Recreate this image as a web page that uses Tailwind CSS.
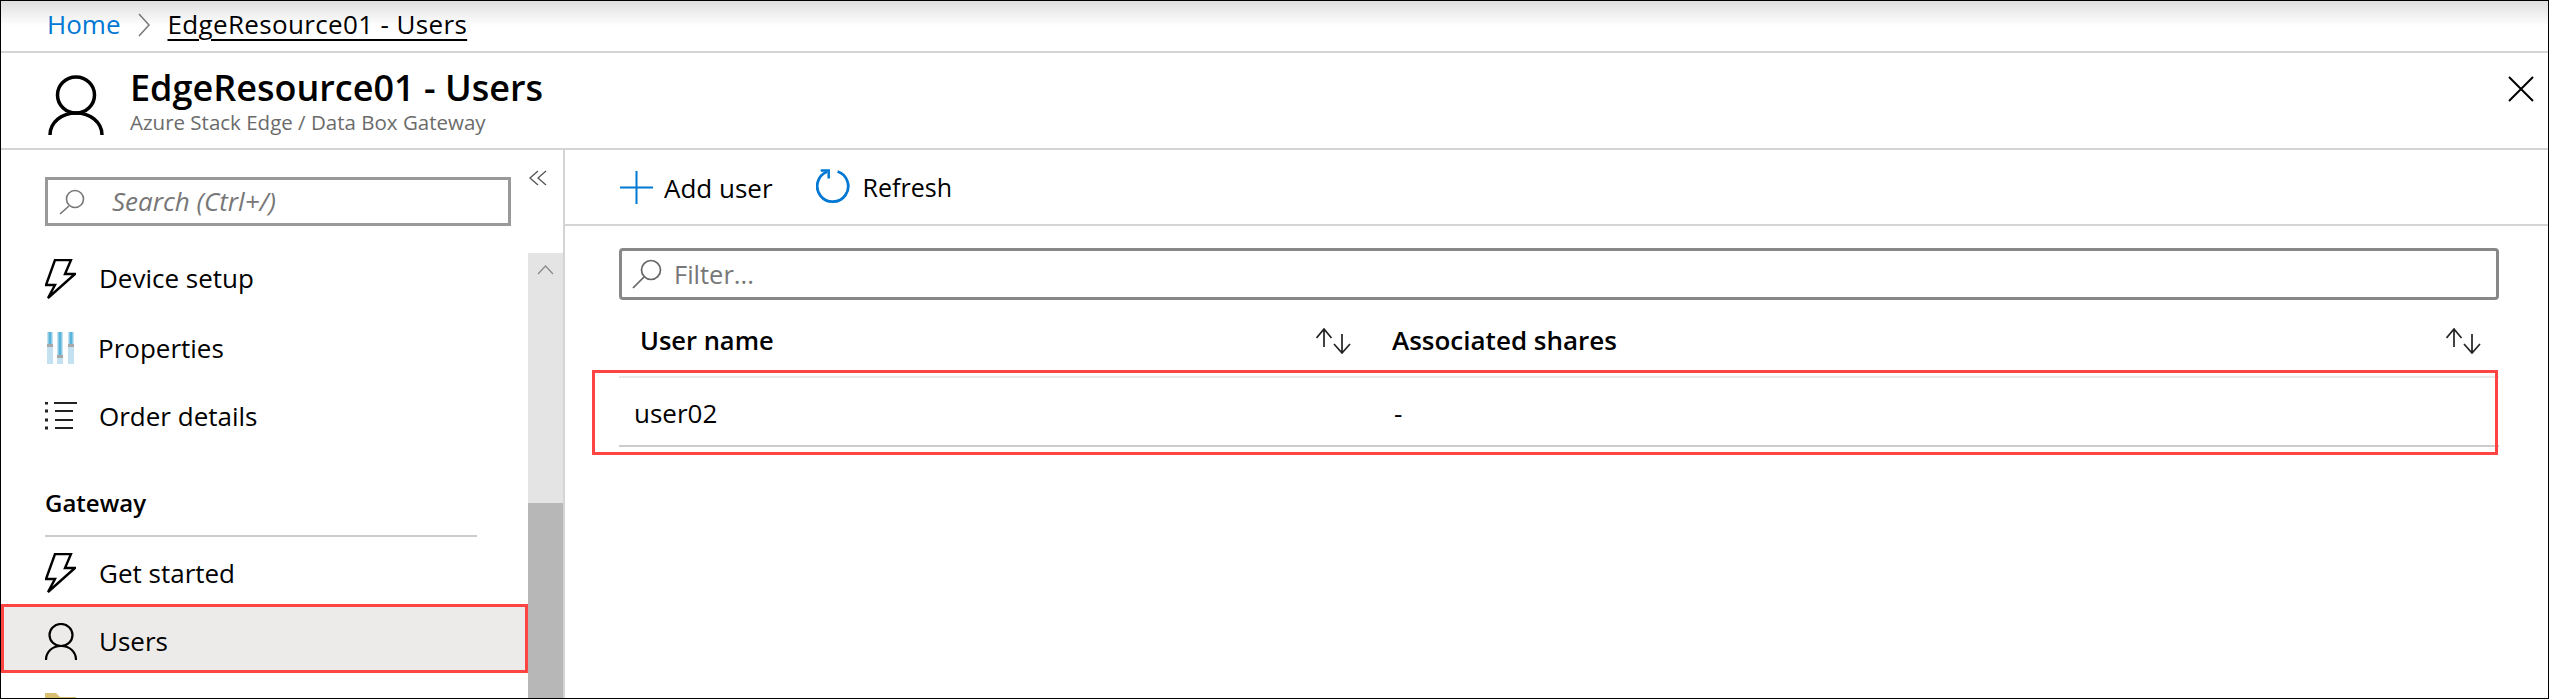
<!DOCTYPE html>
<html lang="en">
<head>
    <meta charset="UTF-8">
    <title>EdgeResource01 - Users</title>
    <script src="https://cdn.jsdelivr.net/npm/@tailwindcss/browser@4"></script>
</head>
<body class="bg-white font-['Open_Sans',sans-serif] text-black">
    <div class="w-[2549px] h-[699px] border border-black overflow-hidden flex flex-col">
        <!-- breadcrumb -->
        <div class="h-[52px] shrink-0 border-b-2 border-[#d4d4d4] bg-linear-to-b from-[#dfdfdf] to-white to-50% flex items-center pl-[46px] pb-[3px] text-[26px]">
            <a class="text-[#0078d4]">Home</a>
            <svg class="w-[12px] h-[24px] ml-[18px] mr-[17px]" viewBox="0 0 12 24" fill="none" stroke="#777" stroke-width="1.5"><path d="M1 1l10 11L1 23"/></svg>
            <a class="underline decoration-2 underline-offset-[5px] tracking-[0.35px]">EdgeResource01 - Users</a>
        </div>
        <!-- blade header -->
        <div class="h-[97px] shrink-0 border-b-2 border-[#d4d4d4] flex items-center relative">
            <svg class="w-[56px] h-[62px] ml-[47px] mr-[26px] mt-[10px]" viewBox="0 0 56 62" fill="none" stroke="#000" stroke-width="3.500"><ellipse cx="28" cy="20" rx="18.500" ry="18"/><path d="M2 60c0-13 12-22 26-22s26 9 26 22"/></svg>
            <div class="flex flex-col pt-[2px]">
                <div class="text-[36px] leading-[42px] font-semibold">EdgeResource01 - Users</div>
                <div class="text-[20.500px] leading-[27px] text-[#6b6b6b]">Azure Stack Edge / Data Box Gateway</div>
            </div>
            <svg class="w-[26px] h-[26px] ml-auto mr-[14px] mb-[24px]" viewBox="0 0 26 26" fill="none" stroke="#000" stroke-width="2"><path d="M1 1l24 24M25 1L1 25"/></svg>
        </div>
        <div class="flex flex-1 min-h-0">
            <!-- sidebar -->
            <div class="w-[564px] shrink-0 border-r-2 border-[#d4d4d4] flex flex-col">
                <div class="h-[103px] shrink-0 flex pl-[44px] pt-[27px]">
                    <div class="w-[466px] h-[49px] border-[3px] border-[#999] flex items-center pl-[11px]">
                        <svg class="w-[26px] h-[26px]" viewBox="0 0 26 26" fill="none" stroke="#777" stroke-width="1.600"><circle cx="16" cy="10" r="8.500"/><path d="M10 17L1 25"/></svg>
                        <span class="ml-[27px] text-[26px] italic text-[#777]">Search (Ctrl+/)</span>
                    </div>
                    <svg class="w-[18px] h-[16px] ml-[18px] mt-[-7px]" viewBox="0 0 18 16" fill="none" stroke="#555" stroke-width="1.300"><path d="M9 1L1 8l8 7M17 1L9 8l8 7"/></svg>
                </div>
                <div class="flex flex-1 min-h-0">
                    <div class="flex-1 min-w-0 flex flex-col pl-[44px] overflow-hidden">
                        <div class="h-[61px] shrink-0 pb-[10px] flex items-center">
                            <svg class="w-[31px] h-[40px]" viewBox="0 0 31 40" fill="none" stroke="#000" stroke-width="2.400"><path d="M10 1h16l-6 14h10L3 39l7-13H1z"/></svg>
                            <span class="ml-[23px] text-[26px]">Device setup</span>
                        </div>
                        <div class="h-[68px] shrink-0 flex items-center">
                            <svg class="w-[27px] h-[32px] ml-[2px]" viewBox="0 0 27 32"><rect x="0" width="6" height="32" fill="#c3e1f0"/><rect x="10" width="6" height="32" fill="#c3e1f0"/><rect x="21" width="6" height="32" fill="#c3e1f0"/><rect x="1.500" width="3" height="12" fill="#59b4d9"/><rect x="11.500" width="3" height="23" fill="#59b4d9"/><rect x="22.500" width="3" height="12" fill="#59b4d9"/><rect x="0" y="12" width="6" height="3" fill="#a8a8a8"/><rect x="10" y="23" width="6" height="3" fill="#a8a8a8"/><rect x="21" y="12" width="6" height="3" fill="#a8a8a8"/></svg>
                            <span class="ml-[24px] text-[26px]">Properties</span>
                        </div>
                        <div class="h-[68px] shrink-0 flex items-center">
                            <svg class="w-[32px] h-[28px]" viewBox="0 0 32 28" fill="none" stroke="#222" stroke-width="2"><path d="M9 1h23M10 9h18M10 18h18M10 26h18"/><path stroke-width="3" d="M0 1h3M0 9h3M0 18h3M0 26h3"/></svg>
                            <span class="ml-[22px] text-[26px]">Order details</span>
                        </div>
                        <div class="h-[87px] shrink-0 flex flex-col justify-end w-[432px] border-b-2 border-[#ccc] pb-[17px]">
                            <span class="text-[24px] font-semibold leading-[30px]">Gateway</span>
                        </div>
                        <div class="h-[67px] shrink-0 pt-[5px] flex items-center">
                            <svg class="w-[31px] h-[40px]" viewBox="0 0 31 40" fill="none" stroke="#000" stroke-width="2.400"><path d="M10 1h16l-6 14h10L3 39l7-13H1z"/></svg>
                            <span class="ml-[23px] text-[26px]">Get started</span>
                        </div>
                        <div class="h-[69px] shrink-0 ml-[-44px] border-[3px] border-[#ff4444] bg-[#ecebe9] flex items-center pl-[41px] pt-[6px]">
                            <svg class="w-[32px] h-[37px]" viewBox="0 0 32 37" fill="none" stroke="#000" stroke-width="2.200"><ellipse cx="16" cy="12" rx="11.500" ry="11"/><path d="M1 37c0-8 6-14 15-14s15 6 15 14"/></svg>
                            <span class="ml-[22px] text-[26px]">Users</span>
                        </div>
                        <svg class="w-[31px] h-[12px] mt-[20px] shrink-0" viewBox="0 0 31 12"><path d="M0 0h11l4 4h16v8H0z" fill="#d9bf72"/></svg>
                    </div>
                    <!-- scrollbar -->
                    <div class="w-[35px] shrink-0 bg-[#e4e4e4] flex flex-col">
                        <div class="h-[250px] shrink-0 flex justify-center pt-[12px]">
                            <svg class="w-[17px] h-[10px]" viewBox="0 0 17 10" fill="none" stroke="#888" stroke-width="1.200"><path d="M1 9l7.500-8L16 9"/></svg>
                        </div>
                        <div class="flex-1 bg-[#b7b7b7]"></div>
                    </div>
                </div>
            </div>
            <!-- users list -->
            <div class="flex-1 min-w-0 flex flex-col">
                <div class="h-[76px] shrink-0 border-b-2 border-[#d4d4d4] flex items-center pl-[55px] pt-[2px] text-[26px]">
                    <svg class="w-[33px] h-[33px] mt-[-2px]" viewBox="0 0 33 33" fill="none" stroke="#0078d4" stroke-width="2"><path d="M16.500 0v33M0 16.500h33"/></svg>
                    <span class="ml-[11px]">Add user</span>
                    <svg class="w-[36px] h-[36px] ml-[43px] mt-[-2px]" viewBox="0 0 36 36" fill="none" stroke="#0078d4" stroke-width="2.800"><path d="M21.600 2.500a15.500 15.500 0 1 1-10.600 0.300"/><path d="M4.700 1.500h8v8" stroke-width="2.500"/></svg>
                    <span class="ml-[11px] text-[25px]">Refresh</span>
                </div>
                <div class="pl-[54px] pr-[49px] pt-[22px]">
                    <div class="h-[52px] border-[3px] border-[#888] rounded-[4px] flex items-center pl-[10px]">
                        <svg class="w-[30px] h-[30px]" viewBox="0 0 30 30" fill="none" stroke="#666" stroke-width="1.700"><circle cx="19" cy="11" r="9.500"/><path d="M12 18L1 29"/></svg>
                        <span class="ml-[12px] text-[25.500px] text-[#777]">Filter...</span>
                    </div>
                    <div class="relative">
                        <div class="h-[76px] pt-[5px] flex items-center font-semibold">
                            <div class="w-[773px] pl-[21px] flex items-center">
                                <span class="text-[25.500px]">User name</span>
                                <svg class="w-[36px] h-[26px] ml-auto mr-[40px]" viewBox="0 0 36 26" fill="none" stroke="#222" stroke-width="1.700"><path d="M8 19V1M.5 10L8 1l7.500 9M26 6v19M18 16l8 9 8-9"/></svg>
                            </div>
                            <div class="flex-1 flex items-center">
                                <span class="text-[26px]">Associated shares</span>
                                <svg class="w-[36px] h-[26px] ml-auto mr-[17px]" viewBox="0 0 36 26" fill="none" stroke="#222" stroke-width="1.700"><path d="M8 19V1M.5 10L8 1l7.500 9M26 6v19M18 16l8 9 8-9"/></svg>
                            </div>
                        </div>
                        <div class="h-[71px] pt-[4px] border-t-2 border-b-2 border-t-[#e8e8e8] border-b-[#ccc] flex items-center text-[26px]">
                            <div class="w-[775px] pl-[15px]">user02</div>
                            <div>-</div>
                        </div>
                        <!-- annotation -->
                        <div class="absolute left-[-27px] top-[70px] w-[1906px] h-[85px] border-[3px] border-[#ff4444]"></div>
                    </div>
                </div>
            </div>
        </div>
    </div>
</body>
</html>
